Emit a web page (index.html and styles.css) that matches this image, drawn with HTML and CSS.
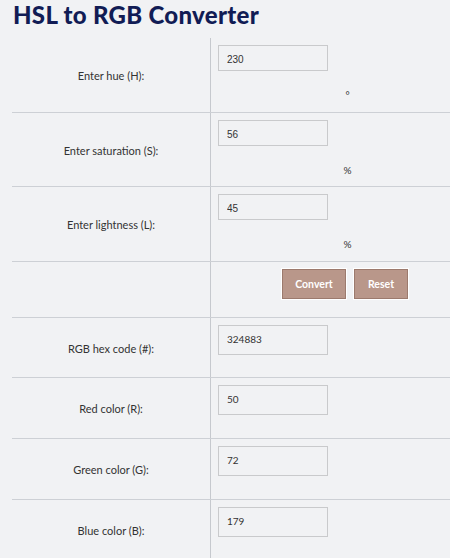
FILE: index.html
```html
<!DOCTYPE html>
<html>
<head>
<meta charset="utf-8">
<link rel="stylesheet" href="styles.css">
</head>
<body>
<h1 class="title">HSL to RGB Converter</h1>
<div class="table">
  <div class="row row-in">
    <div class="label">Enter hue (H):</div>
    <div class="field">
      <input class="inp" type="text" value="230">
      <div class="unit">°</div>
    </div>
  </div>
  <div class="row row-in">
    <div class="label">Enter saturation (S):</div>
    <div class="field">
      <input class="inp" type="text" value="56">
      <div class="unit">%</div>
    </div>
  </div>
  <div class="row row-in row-tall">
    <div class="label">Enter lightness (L):</div>
    <div class="field">
      <input class="inp" type="text" value="45">
      <div class="unit">%</div>
    </div>
  </div>
  <div class="row row-btn">
    <div class="label"></div>
    <div class="field buttons">
      <button class="btn btn-convert">Convert</button>
      <button class="btn btn-reset">Reset</button>
    </div>
  </div>
  <div class="row row-out first-out">
    <div class="label">RGB hex code (#):</div>
    <div class="field"><input class="out" type="text" value="324883"></div>
  </div>
  <div class="row row-out">
    <div class="label">Red color (R):</div>
    <div class="field"><input class="out" type="text" value="50"></div>
  </div>
  <div class="row row-out">
    <div class="label">Green color (G):</div>
    <div class="field"><input class="out" type="text" value="72"></div>
  </div>
  <div class="row row-out">
    <div class="label">Blue color (B):</div>
    <div class="field"><input class="out" type="text" value="179"></div>
  </div>
</div>
</body>
</html>
```
FILE: styles.css
```css
html, body {
  margin: 0;
  padding: 0;
  background: #f1f2f4;
  overflow: hidden;
  font-family: "Lato", "Noto Sans", sans-serif;
  color: #333;
}
.title {
  margin: 0;
  height: 38px;
  padding-left: 13px;
  font-family: "Lato", "Noto Sans", sans-serif;
  font-weight: 900;
  font-size: 24px;
  line-height: 29px;
  color: #111c55;
  letter-spacing: 0.3px;
}
.table {
  margin-left: 12px;
  width: 472px;
}
.row {
  box-sizing: border-box;
  display: grid;
  grid-template-columns: 198px 274px;
  border-top: 1px solid #cdd0d5;
}
.row:first-child {
  border-top: none;
}
.row-in { height: 74px; }
.row-tall { height: 75px; }
.row-btn { height: 56px; }
.row-out { height: 61px; }
.first-out { height: 60px; }
.label {
  display: flex;
  align-items: center;
  justify-content: center;
  font-size: 11px;
  color: #333;
  padding-top: 1px;
}
.field {
  border-left: 1px solid #c6c9ce;
  padding: 7px 0 0 7px;
  display: flex;
  flex-direction: column;
  align-items: flex-start;
}
.inp, .out {
  box-sizing: border-box;
  width: 110px;
  margin: 0;
  background: #f1f2f4;
  border: 1px solid #c9cacc;
  padding: 0 0 0 8px;
  color: #333;
  outline: none;
}
.inp {
  height: 26px;
  font-family: "Liberation Sans", Arial, sans-serif;
  font-size: 10px;
  padding-top: 2px;
}
.out {
  height: 30px;
  font-family: "Lato", "Noto Sans", sans-serif;
  font-size: 10px;
  padding-bottom: 3px;
}
.unit {
  align-self: stretch;
  text-align: center;
  margin-top: 16px;
  margin-left: -7px;
  font-size: 10px;
  line-height: 16px;
  color: #333;
}
.buttons {
  flex-direction: row;
  justify-content: center;
  align-items: flex-start;
  gap: 8px;
  padding-left: 0;
  padding-right: 5px;
}
.btn {
  box-sizing: border-box;
  height: 30px;
  margin: 0;
  background: #b9978a;
  border: 1px solid #9c7a6d;
  outline: 1px solid #ffffff;
  color: #fff;
  font-family: "Lato", "Noto Sans", sans-serif;
  font-weight: 700;
  font-size: 10.5px;
  padding: 0;
}
.btn-convert { width: 64px; }
.btn-reset { width: 54px; }
```
